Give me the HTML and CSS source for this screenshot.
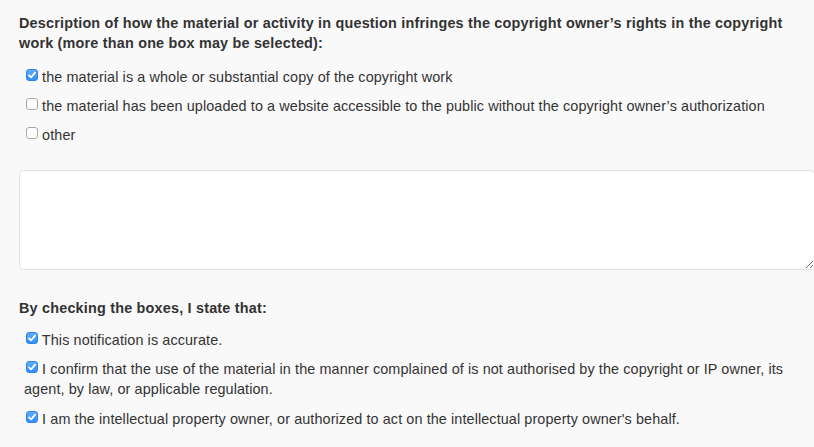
FILE: index.html
```html
<!DOCTYPE html>
<html lang="en">
<head>
<meta charset="utf-8">
<title>Copyright notice</title>
<link rel="stylesheet" href="styles.css">
</head>
<body>
<form class="form">
  <fieldset class="group">
    <legend class="group-title">Description of how the material or activity in question infringes the copyright owner’s rights in the copyright work (more than one box may be selected):</legend>
    <div class="options">
      <label class="option"><span class="cb is-checked"><svg viewBox="0 0 12 12" width="12" height="12"><path d="M3 6.3 L5.1 8.4 L9.1 3.6" fill="none" stroke="#fff" stroke-width="1.8" stroke-linecap="round" stroke-linejoin="round"/></svg></span> the material is a whole or substantial copy of the copyright work</label>
      <label class="option"><span class="cb"></span> the material has been uploaded to a website accessible to the public without the copyright owner’s authorization</label>
      <label class="option"><span class="cb"></span> other</label>
    </div>
  </fieldset>

  <textarea class="details" rows="5" aria-label="Other details"></textarea>

  <fieldset class="group">
    <legend class="group-title">By checking the boxes, I state that:</legend>
    <div class="options options-b">
      <label class="option"><span class="cb is-checked"><svg viewBox="0 0 12 12" width="12" height="12"><path d="M3 6.3 L5.1 8.4 L9.1 3.6" fill="none" stroke="#fff" stroke-width="1.8" stroke-linecap="round" stroke-linejoin="round"/></svg></span> This notification is accurate.</label>
      <label class="option"><span class="cb is-checked"><svg viewBox="0 0 12 12" width="12" height="12"><path d="M3 6.3 L5.1 8.4 L9.1 3.6" fill="none" stroke="#fff" stroke-width="1.8" stroke-linecap="round" stroke-linejoin="round"/></svg></span> I confirm that the use of the material in the manner complained of is not authorised by the copyright or IP owner, its agent, by law, or applicable regulation.</label>
      <label class="option"><span class="cb is-checked"><svg viewBox="0 0 12 12" width="12" height="12"><path d="M3 6.3 L5.1 8.4 L9.1 3.6" fill="none" stroke="#fff" stroke-width="1.8" stroke-linecap="round" stroke-linejoin="round"/></svg></span> I am the intellectual property owner, or authorized to act on the intellectual property owner's behalf.</label>
    </div>
  </fieldset>
</form>
</body>
</html>
```

FILE: styles.css
```css
html, body {
  margin: 0;
  padding: 0;
  overflow: hidden;
  background: #f9f9f9;
}

body {
  font-family: "Liberation Sans", Arial, Helvetica, sans-serif;
  font-size: 14.4px;
  letter-spacing: 0.1px;
  line-height: 20px;
  color: #333;
  padding-top: 13px;
}

.form {
  width: 796px;
  margin-left: 19px;
}

.group {
  border: 0;
  margin: 0;
  padding: 0;
  min-width: 0;
}

.group-title {
  padding: 0;
  font-weight: bold;
  letter-spacing: 0.2px;
  display: block;
  width: 100%;
}

.options {
  display: flex;
  flex-direction: column;
  gap: 9px;
  margin-top: 14px;
  padding-left: 5px;
}

.option {
  display: block;
}

.cb {
  display: inline-block;
  box-sizing: border-box;
  width: 12px;
  height: 12px;
  margin-left: 2px;
  border-radius: 3px;
  border: 1px solid #a9a9a9;
  background: #fff;
  vertical-align: 1px;
  position: relative;
}

.cb svg {
  position: absolute;
  left: -1px;
  top: -1px;
  display: block;
}

.cb.is-checked {
  border-color: #2d84e6;
  background: linear-gradient(#5fabfb, #2f8ef6);
}

.details {
  display: block;
  box-sizing: border-box;
  width: 796px;
  height: 100px;
  margin: 25px 0 28px;
  border: 1px solid #e2e2e2;
  border-radius: 4px;
  background: #fff;
  resize: vertical;
  font: inherit;
}

.options-b {
  margin-top: 12px;
  gap: 9.4px;
}
```
